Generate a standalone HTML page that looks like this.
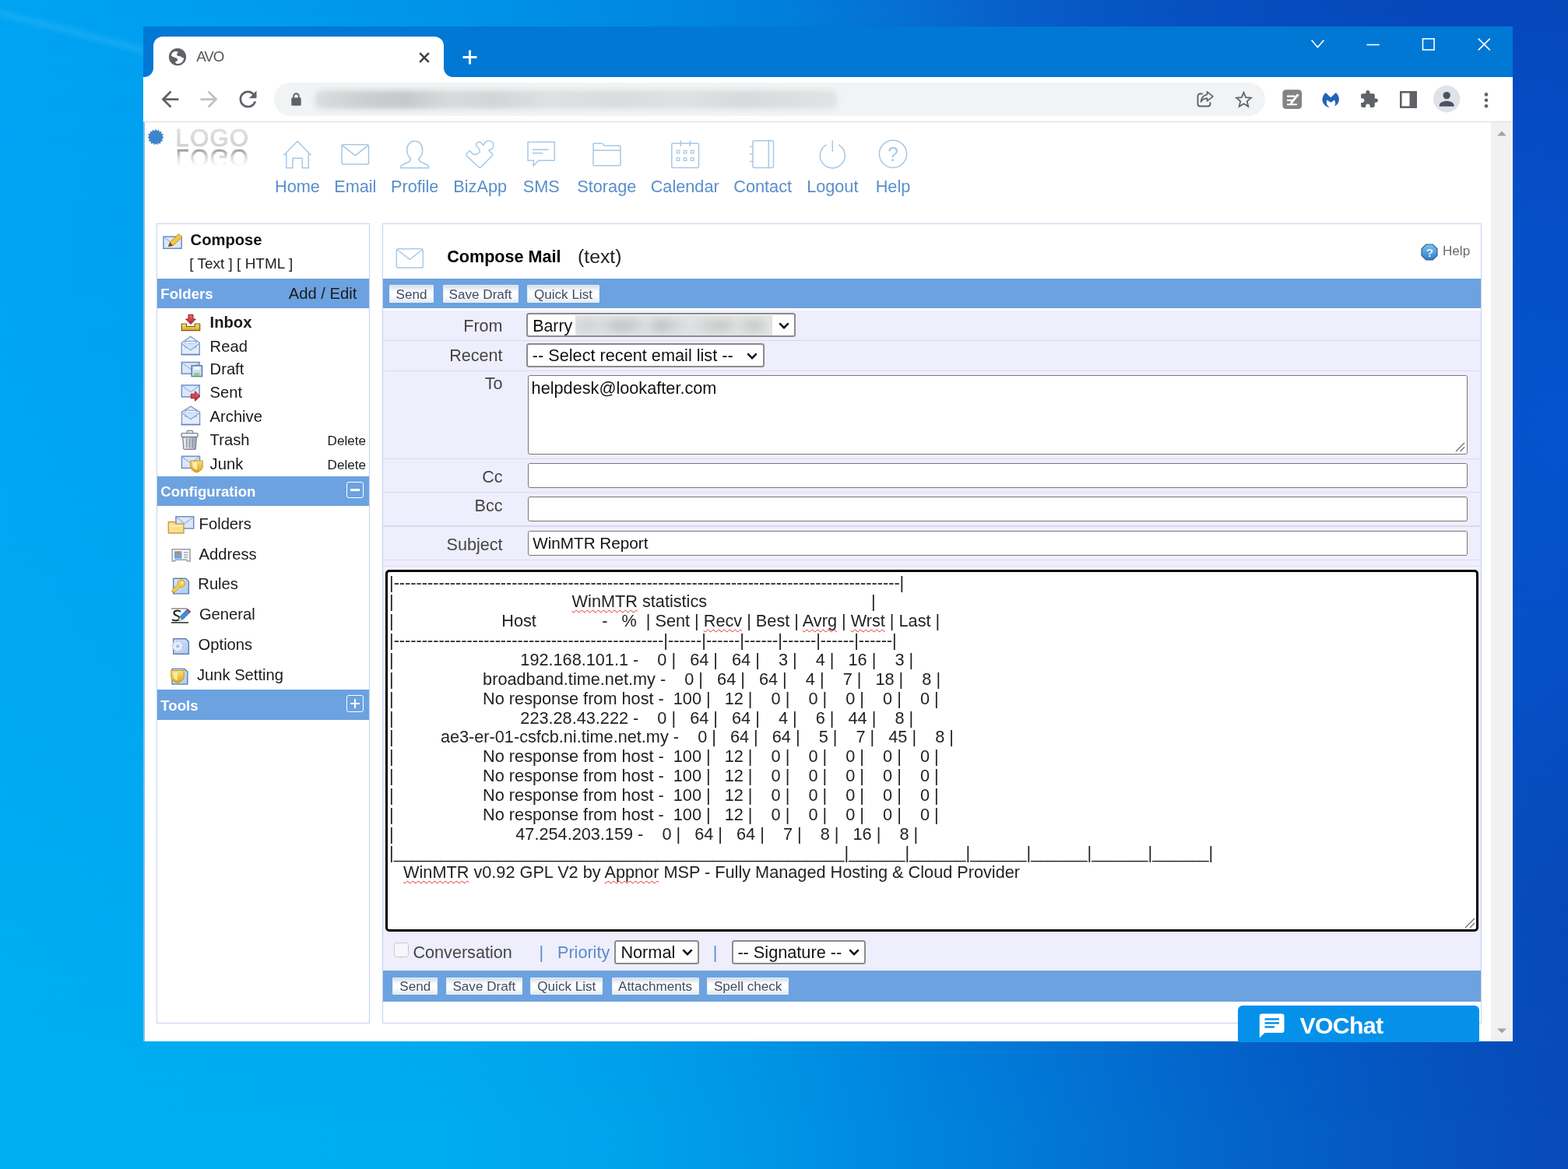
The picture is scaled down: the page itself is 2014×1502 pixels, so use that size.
<!DOCTYPE html>
<html lang="en">
<head>
<meta charset="utf-8">
<title>AVO</title>
<style>
*{box-sizing:border-box;margin:0;padding:0}
html,body{width:2014px;height:1502px;overflow:hidden}
body{position:relative;font-family:"Liberation Sans",Arial,sans-serif;font-size:21.7px;color:#222;
 background:linear-gradient(90deg,#00aff2 0,#00acf1 28%,#00a2ec 40%,#0094e5 50%,#0082dd 60%,#0372d3 70%,#0462c9 80%,#0654c0 91%,#084ab8 100%);}
#bgtop{position:absolute;left:0;top:0;width:2014px;height:1502px;
 background:linear-gradient(90deg,#00a3f2 0,#009dee 14%,#0092e8 30%,#0088e2 42%,#007edc 50%,#0670d4 57%,#0862cc 63%,#0756c5 70%,#064dc0 80%,#0648bc 90%,#0645b8 100%);
 -webkit-mask-image:linear-gradient(to bottom,#000 0%,rgba(0,0,0,.9) 25%,rgba(0,0,0,.35) 70%,rgba(0,0,0,0) 96%);mask-image:linear-gradient(to bottom,#000 0%,rgba(0,0,0,.9) 25%,rgba(0,0,0,.35) 70%,rgba(0,0,0,0) 96%)}
#bgr{position:absolute;left:1600px;top:0px;width:414px;height:1300px;background:radial-gradient(ellipse 380px 620px at 100% 42%,rgba(4,92,220,.6),rgba(4,92,220,.4) 45%,rgba(4,92,220,0) 100%)}
#bgstreak{position:absolute;left:-40px;top:-2px;width:250px;height:16px;transform-origin:0 0;transform:rotate(14.5deg);background:linear-gradient(to bottom,rgba(70,195,255,0),rgba(70,195,255,.3) 50%,rgba(70,195,255,0));filter:blur(2px)}
.abs{position:absolute}
/* ---------- window chrome ---------- */
#titlebar{position:absolute;left:184px;top:34px;width:1759px;height:65px;background:#0078d4}
#tab{position:absolute;left:197px;top:47px;width:373px;height:53px;background:#fff;border-radius:12px 12px 0 0}
#tabl,#tabr{position:absolute;top:87px;width:12px;height:12px;background:radial-gradient(circle at 0 0,rgba(255,255,255,0) 11.5px,#fff 12.5px)}
#tabl{left:185px}
#tabr{left:570px;background:radial-gradient(circle at 100% 0,rgba(255,255,255,0) 11.5px,#fff 12.5px)}
#tabtitle{position:absolute;left:252.300px;top:62.300px;font-size:18.800px;line-height:22px;color:#53575c;letter-spacing:-1.100px}
#toolbar{position:absolute;left:184px;top:99px;width:1759px;height:58px;background:#fff;border-bottom:1.5px solid #d9dbde}
#omni{position:absolute;left:352px;top:106px;width:1273px;height:43px;border-radius:22px;background:#f1f3f4}
#urlblur{position:absolute;left:404px;top:116px;width:672px;height:24px;border-radius:10px;filter:blur(3px);
 background:linear-gradient(90deg,#dcdddf,#cbcdcf 10%,#c6c8ca 17%,#d9dadc 26%,#d3d4d6 34%,#dfe0e2 45%,#dadbdd 58%,#e0e1e3 70%,#d8d9db 82%,#e2e3e5)}
#page{position:absolute;left:184px;top:157px;width:1759px;height:1181px;background:#fff;overflow:hidden}
#sbar{position:absolute;left:1915px;top:157px;width:28px;height:1181px;background:#f1f1f1}
svg{position:absolute;overflow:visible}
#soft{position:absolute;left:0;top:0;width:2014px;height:1502px;filter:blur(.5px)}
.btn{background:linear-gradient(#d3dde9 0%,#fff 38%,#fff 62%,#e3e9f1 100%);border:1.2px solid #e9eef5;border-radius:1px}
.inp{background:#fff;border:1.5px solid #767676;border-radius:2.8px}
.sel{background:#fff;border:2px solid #8b8b8b;border-radius:3.5px}
.sp{text-decoration:underline wavy #e8282b;text-decoration-thickness:1.3px;text-underline-offset:2.5px;text-decoration-skip-ink:none}
#ta{position:absolute;left:500px;top:736.600px;font-size:21.700px;line-height:24.850px;color:#222;white-space:pre}
/* ---------- page header ---------- */
#logo,#logor{position:absolute;left:225.500px;font-size:30.800px;line-height:30px;font-weight:400;letter-spacing:1.500px;height:30px;-webkit-text-stroke:.7px #d4d4d4}
#logo{top:162.500px;color:#d9d9d9;background:linear-gradient(#e2e2e2 20%,#cfcfcf 90%);-webkit-background-clip:text;background-clip:text;-webkit-text-fill-color:transparent;filter:blur(.5px)}
#logor{top:187.300px;transform:scaleY(-1);color:#9a9a9a;-webkit-text-stroke:.7px #9a9a9a;-webkit-mask-image:linear-gradient(to top,rgba(0,0,0,.95) 18%,rgba(0,0,0,.35) 50%,rgba(0,0,0,0) 88%);mask-image:linear-gradient(to top,rgba(0,0,0,.95) 18%,rgba(0,0,0,.35) 50%,rgba(0,0,0,0) 88%);filter:blur(.6px)}
.nl{position:absolute;top:226.500px;width:140px;margin-left:-70px;text-align:center;font-size:21.700px;line-height:25px;color:#5a8ecb;white-space:nowrap}
.ni{fill:none;stroke:#a5c8e6;stroke-width:1.500;stroke-linejoin:round;stroke-linecap:round}

</style>
</head>
<body>
<div id="bgtop"></div><div id="bgr"></div><div id="bgstreak"></div>
<div id="soft">
<div id="titlebar"></div>
<div id="tab"></div><div id="tabl"></div><div id="tabr"></div>
<div id="tabtitle">AVO</div>
<div id="toolbar"></div>
<div id="omni"></div>
<div id="urlblur"></div>
<div id="page"></div>
<div id="sbar"></div>
<svg style="left:1915px;top:157px" width="28" height="1181" viewBox="0 0 28 1181"><path d="M8 17.500L14 11.500L20 17.500Z" fill="#a3a3a3"/><path d="M8 1164.500L14 1170.500L20 1164.500Z" fill="#a3a3a3"/></svg>

<!-- tab favicon, close, new tab -->
<svg style="left:216px;top:61px" width="24" height="24" viewBox="216 61 24 24"><circle cx="228" cy="73.200" r="11.100" fill="#5f6368"/><path fill="#fff" d="M219.900 71.800C220.300 69.500 221.200 68 221.900 67.400C223.200 66.300 224.800 65.900 226.400 65.900L228.800 66.900L226.800 69.900L228.300 71.800L232.800 72.800L234.500 74.800L236 73.800C236.200 75.200 235.900 76.600 235.300 77.800C234.600 79.300 233.400 80.500 231.800 81.300C230.200 82 228 82.200 226.400 81.800L224.900 79.800L228.300 77.800L227.300 74.800L223.900 73.800Z"/></svg>
<svg style="left:537.5px;top:66.8px" width="14" height="14" viewBox="0 0 14 14"><path d="M1.2 1.2L12.8 12.8M12.8 1.2L1.2 12.8" stroke="#3c4043" stroke-width="2.5" fill="none"/></svg>
<svg style="left:594px;top:64px" width="19" height="19" viewBox="0 0 19 19"><path d="M9.5 0.5V18.500M0.5 9.500H18.500" stroke="#fff" stroke-width="2.800" fill="none"/></svg>
<!-- window controls -->
<svg style="left:1680px;top:44px" width="240" height="26" viewBox="1680 44 240 26" fill="none" stroke="#fff" stroke-width="1.600">
<path d="M1684.6 51.6L1692.5 60.8L1700.4 51.600"/>
<path d="M1755.4 57.5H1771.800"/>
<rect x="1827.5" y="49.8" width="14.6" height="14.200"/>
<path d="M1898.8 49.6L1913.8 64.400M1913.8 49.6L1898.8 64.400"/>
</svg>
<!-- nav buttons -->
<svg style="left:201.9px;top:111px" width="33" height="33" viewBox="0 0 24 24"><path fill="#5f6368" d="M20 11H7.83l5.59-5.59L12 4l-8 8 8 8 1.41-1.41L7.83 13H20v-2z"/></svg>
<svg style="left:251.900px;top:111px" width="33" height="33" viewBox="0 0 24 24"><path fill="#bdc1c6" d="M12 4l-1.410 1.410L16.170 11H4v2h12.170l-5.580 5.590L12 20l8-8z"/></svg>
<svg style="left:301.500px;top:111px" width="33" height="33" viewBox="0 0 24 24"><path fill="#5f6368" d="M17.650 6.350C16.200 4.900 14.210 4 12 4c-4.420 0-7.990 3.580-7.990 8s3.570 8 7.990 8c3.730 0 6.840-2.550 7.730-6h-2.080c-.82 2.330-3.040 4-5.650 4-3.310 0-6-2.690-6-6s2.690-6 6-6c1.660 0 3.140.69 4.220 1.780L13 11h7V4l-2.350 2.350z"/></svg>
<!-- lock -->
<svg style="left:373.500px;top:118.500px" width="13" height="17" viewBox="0 0 13 17"><path d="M3.200 7V4.600a3.300 3.300 0 0 1 6.600 0V7" fill="none" stroke="#5f6368" stroke-width="1.900"/><rect x="0.300" y="6.400" width="12.400" height="10.300" rx="1.300" fill="#5f6368"/></svg>
<!-- share -->
<svg style="left:1536px;top:116px" width="24" height="22" viewBox="0 0 24 22" fill="none" stroke="#5f6368" stroke-width="1.900" stroke-linejoin="round" stroke-linecap="round"><path d="M8 4.500H5.500a3 3 0 0 0-3 3V17.500a3 3 0 0 0 3 3H15.500a3 3 0 0 0 3-3V16"/><path d="M14.500 1.800L22 7.800L14.500 13.800V10.300C10.500 10.300 8 11.800 6.500 14.800C7 10.300 9.500 6.300 14.500 5.500Z" stroke-width="1.700"/></svg>
<!-- star -->
<svg style="left:1585.100px;top:114.900px" width="25" height="25" viewBox="0 0 24 24"><path fill="none" stroke="#5f6368" stroke-width="1.700" stroke-linejoin="miter" d="M12 3.700l2.550 6.020 6.520.56-4.950 4.290 1.480 6.370L12 17.560 6.400 20.940l1.480-6.370-4.950-4.290 6.520-.56z"/></svg>
<!-- ext1 -->
<svg style="left:1640px;top:108px" width="90" height="40" viewBox="1640 108 90 40"><rect x="1647.400" y="115.200" width="24.700" height="24.800" rx="4.300" fill="#848484"/><path d="M1653 123.600H1663.200M1653 128.900H1661.400M1653 134.200H1666" stroke="#fff" stroke-width="2.100"/><path d="M1657.800 133.500L1666.300 122.300" stroke="#fff" stroke-width="2.800"/><path d="M1666.200 120.300L1668.800 122.600L1667.200 124.300L1664.800 122.200Z" fill="#fff"/>
<path fill="#2263b8" d="M1702.600 119L1709.300 125.200L1716 119C1719 122 1720.500 126 1719.800 129.500C1719 133 1716.500 135.500 1714.200 136.500C1715.500 134 1715.500 131 1714 128.500L1709.300 131.800L1704.600 128.500C1703.200 131 1703.500 135 1707.900 138.200C1703 137.500 1699.500 134 1698.600 129.500C1698 126 1699.500 122 1702.600 119Z"/></svg>
<!-- puzzle -->
<svg style="left:1746.300px;top:115.200px" width="25" height="25" viewBox="0 0 24 24"><path fill="#5f6368" d="M20.500 11H19V7c0-1.100-.9-2-2-2h-4V3.500C13 2.120 11.880 1 10.500 1S8 2.120 8 3.500V5H4c-1.100 0-1.990.9-1.990 2v3.800H3.500c1.490 0 2.700 1.210 2.700 2.700s-1.210 2.700-2.700 2.700H2V20c0 1.100.9 2 2 2h3.800v-1.500c0-1.490 1.210-2.700 2.700-2.700 1.490 0 2.700 1.210 2.700 2.700V22H17c1.100 0 2-.9 2-2v-4h1.500c1.380 0 2.500-1.120 2.500-2.500S21.880 11 20.500 11z"/></svg>
<!-- side panel -->
<svg style="left:1798px;top:116.800px" width="22" height="22" viewBox="0 0 22 22"><rect x="1.300" y="1.300" width="19.400" height="19.400" fill="#fff" stroke="#5f6368" stroke-width="2.600"/><rect x="12.500" y="1" width="9" height="20" fill="#5f6368"/></svg>
<!-- avatar -->
<svg style="left:1840.800px;top:110.300px" width="34.400" height="34.400" viewBox="0 0 34.400 34.400"><circle cx="17.200" cy="17.200" r="17.200" fill="#e0e2e8"/><circle cx="17.200" cy="12.600" r="4.700" fill="#4a5363"/><path d="M7.800 25.500c0-4.200 6.200-5.800 9.400-5.800s9.400 1.600 9.400 5.800v1.200H7.800z" fill="#4a5363"/></svg>
<!-- menu dots -->
<svg style="left:1905px;top:118px" width="8" height="22" viewBox="0 0 8 22"><circle cx="4" cy="3.400" r="2.300" fill="#5f6368"/><circle cx="4" cy="10.800" r="2.300" fill="#5f6368"/><circle cx="4" cy="18.200" r="2.300" fill="#5f6368"/></svg>


<div id="winedge" class="abs" style="left:184px;top:157px;width:1.500px;height:1181px;background:#7cc0f2"></div>
<svg style="left:189px;top:164.500px" width="22" height="22" viewBox="-11 -11 22 22"><polygon fill="#3d85c8" points="0,-10.300 1.700,-7.700 4,-9.500 4.700,-6.500 7.300,-7.300 7.100,-4.300 10,-3.900 8.500,-1.400 10.300,0.900 8,2.500 9.200,5.200 6.400,5.700 6.100,8.700 3.400,7.900 1.800,10.300 0,8.300 -1.800,10.300 -3.400,7.900 -6.100,8.700 -6.400,5.700 -9.200,5.200 -8,2.500 -10.300,0.900 -8.500,-1.400 -10,-3.900 -7.100,-4.300 -7.300,-7.300 -4.700,-6.500 -4,-9.500 -1.700,-7.700"/></svg>
<div id="logo">LOGO</div>
<div id="logor">LOGO</div>
<svg class="ni" style="left:340px;top:165px" width="860" height="60" viewBox="340 165 860 60">
<!-- home -->
<path d="M364.800 199.300L382 181.500L399.200 199.300M367.800 196.800V215.800H375.800V203.300H388.300V215.800H396.300V196.800"/>
<!-- email -->
<rect x="439" y="185.800" width="34.500" height="25.300" rx="2.200"/><path d="M439.800 186.800L456.300 199.800L472.800 186.800"/>
<!-- profile -->
<path d="M532.700 181.300c5.800 0 10 4.500 10 11.200 0 5.300-2.300 9.300-4.800 11.200 0 2.500 .8 3.500 3 4.500l7.500 3.500c1.800 .9 2.400 2.200 2.400 4.100H514.600c0-1.900 .6-3.200 2.400-4.100l7.500-3.500c2.200-1 3-2 3-4.500-2.500-1.900-4.800-5.900-4.800-11.200 0-6.700 4.200-11.200 10-11.200z"/>
<!-- bizapp puzzle -->
<path d="M599.300 200.300Q598.300 199 599.500 197.600L602.500 194.300Q603.600 193.300 604.600 194.600C606 197.500 608.500 198.600 611 198.400C614 198.100 616.300 196 616.200 193.500C616.100 191 614 189.500 612.300 188C610.800 186.500 611.500 184.500 613.300 183C615 181.800 617 182.200 618.200 183.500L621 186.700C621.800 185 622.500 183.500 623.500 182.600C625.500 180.800 629 180.600 631.300 181.900C633.500 183.200 634.300 186 633.500 188.700C632.800 191 631 192.300 627.800 193L632.300 197.700Q633.300 198.800 632.200 200L617.600 214.800Q616.300 215.800 615 214.800Z"/>
<!-- sms -->
<path d="M678 182.500H712.300V206.300H691.500L685 213.300L685.500 206.300H678Z"/><path d="M684.500 192.300H704M684.500 196.800H697"/>
<!-- storage -->
<path d="M762 211.800V185.300C762 184.600 762.500 184.300 763 184.300H773.500L776.500 187.300H795.500C796.300 187.300 797 187.800 797 188.800V211.800C797 212.500 796.500 212.800 795.800 212.800H763.300C762.500 212.800 762 212.500 762 211.800ZM762 193.300H797"/>
<!-- calendar -->
<rect x="862.800" y="184.300" width="34.700" height="31.300" rx="1.500"/><path d="M874.300 181V187.500M886.300 181V187.500"/>
<g stroke-width="1.300"><rect x="869.200" y="193.300" width="3.600" height="3.600"/><rect x="878.300" y="193.300" width="3.600" height="3.600"/><rect x="887.400" y="193.300" width="3.600" height="3.600"/><rect x="869.200" y="202.800" width="3.600" height="3.600"/><rect x="878.300" y="202.800" width="3.600" height="3.600"/><rect x="887.400" y="202.800" width="3.600" height="3.600"/></g>
<!-- contact -->
<rect x="967" y="180.800" width="26.500" height="34.700" rx="2"/><path d="M987.300 181V215.500M963.500 188.500H967M963.500 198H967M963.500 207.500H967"/>
<!-- logout -->
<path d="M1069.300 181V194.300M1061 186.300A16 16 0 1 0 1077.600 186.300"/>
<!-- help -->
<circle cx="1147" cy="197.800" r="17.600"/>
</svg>
<div class="abs" style="left:1137px;top:183.500px;width:20px;text-align:center;font-size:25px;line-height:28px;color:#a5c8e6">?</div>
<div class="nl" style="left:382px">Home</div>
<div class="nl" style="left:456.300px">Email</div>
<div class="nl" style="left:532.700px">Profile</div>
<div class="nl" style="left:616.700px">BizApp</div>
<div class="nl" style="left:695.300px">SMS</div>
<div class="nl" style="left:779.300px">Storage</div>
<div class="nl" style="left:879.700px">Calendar</div>
<div class="nl" style="left:979.700px">Contact</div>
<div class="nl" style="left:1069.300px">Logout</div>
<div class="nl" style="left:1147px">Help</div>

<div class="abs" style="left:200.5px;top:286.5px;width:274px;height:1028px;border:1.5px solid #c4d2f1;background:#fff;"></div>
<div class="abs" style="left:244.6px;top:298px;font-size:20.2px;line-height:20.2px;color:#111;white-space:pre;font-weight:bold;">Compose</div>
<div class="abs" style="left:243.2px;top:329px;font-size:19px;line-height:19px;color:#222;white-space:pre;">[ Text ] [ HTML ]</div>
<div class="abs" style="left:201.5px;top:358px;width:272px;height:38.3px;background:#6ca2e0;"></div>
<div class="abs" style="left:206.3px;top:369px;font-size:18.65px;line-height:18.65px;color:#fff;white-space:pre;font-weight:bold;">Folders</div>
<div class="abs" style="left:201.5px;top:612px;width:272px;height:38.4px;background:#6ca2e0;"></div>
<div class="abs" style="left:206.3px;top:623px;font-size:18.65px;line-height:18.65px;color:#fff;white-space:pre;font-weight:bold;">Configuration</div>
<div class="abs" style="left:201.5px;top:886px;width:272px;height:39px;background:#6ca2e0;"></div>
<div class="abs" style="left:206.3px;top:898px;font-size:18.65px;line-height:18.65px;color:#fff;white-space:pre;font-weight:bold;">Tools</div>
<div class="abs" style="left:370.8px;top:367px;font-size:20.2px;line-height:20.2px;color:#1a1a1a;white-space:pre;">Add / Edit</div>
<div class="abs" style="left:445.3px;top:618.6px;width:21.6px;height:21.6px;border:1.6px solid #fff;border-radius:3px"></div>
<div class="abs" style="left:450.3px;top:628.3px;width:11.6px;height:2.4px;background:#fff;"></div>
<div class="abs" style="left:445.3px;top:893.3px;width:21.6px;height:21.6px;border:1.6px solid #fff;border-radius:3px"></div>
<div class="abs" style="left:450.3px;top:903px;width:11.6px;height:2.4px;background:#fff;"></div>
<div class="abs" style="left:454.9px;top:898.4px;width:2.4px;height:11.6px;background:#fff;"></div>
<div class="abs" style="left:269.6px;top:404px;font-size:20.2px;line-height:20.2px;color:#1a1a1a;white-space:pre;font-weight:bold;">Inbox</div>
<div class="abs" style="left:269.6px;top:435px;font-size:20.2px;line-height:20.2px;color:#1a1a1a;white-space:pre;">Read</div>
<div class="abs" style="left:269.6px;top:464px;font-size:20.2px;line-height:20.2px;color:#1a1a1a;white-space:pre;">Draft</div>
<div class="abs" style="left:269.6px;top:494px;font-size:20.2px;line-height:20.2px;color:#1a1a1a;white-space:pre;">Sent</div>
<div class="abs" style="left:269.6px;top:525px;font-size:20.2px;line-height:20.2px;color:#1a1a1a;white-space:pre;">Archive</div>
<div class="abs" style="left:269.6px;top:555px;font-size:20.2px;line-height:20.2px;color:#1a1a1a;white-space:pre;">Trash</div>
<div class="abs" style="left:269.6px;top:586px;font-size:20.2px;line-height:20.2px;color:#1a1a1a;white-space:pre;">Junk</div>
<div class="abs" style="left:420.6px;top:558px;font-size:17.1px;line-height:17.1px;color:#1a1a1a;white-space:pre;">Delete</div>
<div class="abs" style="left:420.6px;top:589px;font-size:17.1px;line-height:17.1px;color:#1a1a1a;white-space:pre;">Delete</div>
<div class="abs" style="left:255.6px;top:663px;font-size:20.2px;line-height:20.2px;color:#1a1a1a;white-space:pre;">Folders</div>
<div class="abs" style="left:255.6px;top:702px;font-size:20.2px;line-height:20.2px;color:#1a1a1a;white-space:pre;">Address</div>
<div class="abs" style="left:254.3px;top:740px;font-size:20.2px;line-height:20.2px;color:#1a1a1a;white-space:pre;">Rules</div>
<div class="abs" style="left:255.9px;top:779px;font-size:20.2px;line-height:20.2px;color:#1a1a1a;white-space:pre;">General</div>
<div class="abs" style="left:254.6px;top:818px;font-size:20.2px;line-height:20.2px;color:#1a1a1a;white-space:pre;">Options</div>
<div class="abs" style="left:252.9px;top:857px;font-size:20.2px;line-height:20.2px;color:#1a1a1a;white-space:pre;">Junk Setting</div>
<svg style="left:200px;top:290px" width="80" height="600" viewBox="200 290 80 600">
<defs><linearGradient id="gold" x1="0" y1="0" x2="0" y2="1"><stop offset="0" stop-color="#f7e27a"/><stop offset="1" stop-color="#dda51c"/></linearGradient><linearGradient id="red" x1="0" y1="0" x2="0" y2="1"><stop offset="0" stop-color="#ef6a72"/><stop offset="1" stop-color="#b8202c"/></linearGradient><linearGradient id="gry" x1="0" y1="0" x2="1" y2="0"><stop offset="0" stop-color="#eef1f6"/><stop offset=".5" stop-color="#c9d1dd"/><stop offset="1" stop-color="#9aa4b4"/></linearGradient><linearGradient id="doc" x1="0" y1="0" x2="1" y2="1"><stop offset="0" stop-color="#dbe9fc"/><stop offset="1" stop-color="#a9c9f3"/></linearGradient></defs>
<rect x="209.95" y="304.05" width="23.3" height="15.2" fill="#dbe7fb" stroke="#6f8fc0" stroke-width="1.5"/><path d="M211.2 305.3L221.6 312.99L232 305.3" fill="none" stroke="#9db6dc" stroke-width="1.3"/><path d="M216.5 316.5L218.5 311L229.500 300.500L233.800 304.500L222.500 315.500Z" fill="#f0c74a" stroke="#c98a2a" stroke-width="1"/><path d="M216 317L218.300 311.300L222 315.500Z" fill="#7a4a1a"/>
<path d="M233.300 416H239.600V419.500H250.400V416H256.700V424.700H233.300Z" fill="url(#gold)" stroke="#7b5a12" stroke-width="1.2" stroke-linejoin="round"/><path d="M242 404.300H248V410H251.300L245 416.500L238.700 410H242Z" fill="url(#red)" stroke="#8e1822" stroke-width="1"/>
<path d="M233.3 440.5L244.8 432.2L256.3 440.5V455.6H233.3Z" fill="#e3edfc" stroke="#7f9cc8" stroke-width="1.4" stroke-linejoin="round"/><rect x="238.1" y="438.5" width="13.4" height="8" fill="#f4f8ff" stroke="#8fa9d2" stroke-width="1.2"/><path d="M240.6 441.8H249" stroke="#6fa8d8" stroke-width="1.6"/><path d="M233.3 441.5L244.8 450L256.3 441.5" fill="#d5e3fa" stroke="#8fa9d2" stroke-width="1.2"/><path d="M232.6 455.5H257" stroke="#6584b6" stroke-width="1.6"/>
<rect x="233.35" y="465.45" width="22.9" height="14.8" fill="#dbe7fb" stroke="#6f8fc0" stroke-width="1.5"/><path d="M234.6 466.7L244.8 474.15L255 466.7" fill="none" stroke="#9db6dc" stroke-width="1.3"/><rect x="246.200" y="469.800" width="13.300" height="13.800" fill="#c9dcf6" stroke="#5d7db3" stroke-width="1.5"/><rect x="249" y="471" width="7.700" height="4.300" fill="#f3f7fd"/><rect x="249.300" y="479.300" width="7" height="3.200" fill="#8ed04c"/>
<rect x="233.35" y="494.95" width="22.9" height="14.9" fill="#dbe7fb" stroke="#6f8fc0" stroke-width="1.5"/><path d="M234.6 496.2L244.8 503.71L255 496.2" fill="none" stroke="#9db6dc" stroke-width="1.3"/><path d="M245.300 506.300H250.500V502.800L256.800 509L250.500 515.200V511.800H245.300Z" fill="url(#red)" stroke="#9c1c28" stroke-width="1"/>
<path d="M233.4 529.3L245 522.2L256.6 529.3V545.6H233.4Z" fill="#e3edfc" stroke="#7f9cc8" stroke-width="1.4" stroke-linejoin="round"/><rect x="238.2" y="527.3" width="13.6" height="8" fill="#f4f8ff" stroke="#8fa9d2" stroke-width="1.2"/><path d="M240.7 530.6H249.3" stroke="#6fa8d8" stroke-width="1.6"/><path d="M233.4 530.3L245 538.8L256.6 530.3" fill="#d5e3fa" stroke="#8fa9d2" stroke-width="1.2"/><path d="M232.7 545.5H257.3" stroke="#6584b6" stroke-width="1.6"/>
<rect x="240.300" y="553.300" width="7.300" height="3.500" rx="1" fill="#e8ebf0" stroke="#7d8592" stroke-width="1.200"/><path d="M234.800 561.500H252.300L251.300 576.500Q251.200 577.300 250.300 577.300H236.800Q235.900 577.300 235.800 576.500Z" fill="url(#gry)" stroke="#7d8592" stroke-width="1.300"/><path d="M239.800 563.500V575M243.600 563.500V575M247.400 563.500V575" stroke="#8a93a3" stroke-width="1.300"/><rect x="233" y="556.600" width="21" height="4.900" rx="1" fill="#f2f4f7" stroke="#7d8592" stroke-width="1.300"/>
<rect x="233.45" y="586.25" width="23.1" height="15.2" fill="#dbe7fb" stroke="#6f8fc0" stroke-width="1.5"/><path d="M234.7 587.5L245 595.19L255.3 587.5" fill="none" stroke="#9db6dc" stroke-width="1.3"/><path d="M244.800 592H260.200V599C260.200 603 256.500 606 252.500 607C248.500 606 244.800 603 244.800 599Z" fill="url(#gold)" stroke="#c8921a" stroke-width="1"/><path d="M247.500 594.300H253V603.500C250 602.500 247.500 600.500 247.500 598Z" fill="#fbf0b8"/>
<rect x="225.95" y="663.75" width="22.8" height="15.3" fill="#dbe7fb" stroke="#6f8fc0" stroke-width="1.5"/><path d="M227.2 665L237.35 672.74L247.5 665" fill="none" stroke="#9db6dc" stroke-width="1.3"/><path d="M216.300 670.500H224L226 673H236V685H216.300Z" fill="#f6e08a" stroke="#cf9a4a" stroke-width="1.400" stroke-linejoin="round"/><path d="M217.500 676H235" stroke="#fbf1c0" stroke-width="1.500"/>
<path d="M221.200 705.800H244V721H240.500L239.500 719.300H225.500L224.500 721H221.200Z" fill="#f7f8fa" stroke="#9a9da2" stroke-width="1.500"/><rect x="224" y="708.300" width="9.500" height="9.500" fill="#6ea4e0"/><rect x="225.300" y="708.500" width="6" height="3.500" fill="#c98a4a"/><path d="M236 709.800H241.500M236 712.900H241.500M236 716H241.500" stroke="#a9adb5" stroke-width="1.500"/>
<path d="M222.7 743.2H238.6L242.4 747V762.9H222.7Z" fill="url(#doc)" stroke="#5f7eae" stroke-width="1.400" stroke-linejoin="round"/><path d="M220.800 760.500L221.500 757.500L228.500 751C227.500 748 229.500 745 233 745C236.500 745 238.500 748 237.500 751C236.500 754 233.500 755 231 754L224.500 761Z" fill="#f1cf55" stroke="#c79a22" stroke-width="1"/><circle cx="233.800" cy="748.800" r="1.400" fill="#fff7d0"/>
<path d="M220 782H240M220 800.300H242" stroke="#8c8c8c" stroke-width="1.500"/><path d="M220 799.800H242" stroke="#444" stroke-width="1.400"/><path d="M232 786C229 783.500 223 784.500 223.500 788C224 791.500 231 790.500 230.500 794.500C230 798 224 798 221 796" fill="none" stroke="#222" stroke-width="2"/><path d="M229.500 797.500L231 792.500L241 782.200L244.800 786L234.500 796Z" fill="#3a8de0" stroke="#1f5fb0" stroke-width=".8"/><path d="M239.500 783.800L241 782.200L244.800 786L243.200 787.600Z" fill="#e0383e"/><path d="M229.300 797.800L230.800 793L234 796.200Z" fill="#f3d98a"/>
<path d="M222.7 820.7H238.6L242.4 824.5V840.3H222.7Z" fill="url(#doc)" stroke="#5f7eae" stroke-width="1.400" stroke-linejoin="round"/><circle cx="228.300" cy="830.300" r="6.800" fill="#e6eefb" stroke="#b9c9e6" stroke-width="2" stroke-dasharray="2.600 1.600"/><circle cx="228.300" cy="830.300" r="2.200" fill="#a9bfe3"/>
<path d="M221.1 859.4H237.1L240.9 863.2V879.1H221.1Z" fill="url(#doc)" stroke="#5f7eae" stroke-width="1.400" stroke-linejoin="round"/><path d="M219.800 861.500H236.200V869.500C236.200 873.500 232.500 876.300 228 877.300C223.500 876.300 219.800 873.500 219.800 869.500Z" fill="url(#gold)" stroke="#c8921a" stroke-width="1"/><path d="M222.500 863.800H228V874.300C225 873.300 222.500 871.500 222.500 869Z" fill="#fbf0b8" opacity=".8"/>
</svg>

<div class="abs" style="left:490.8px;top:286.5px;width:1412.2px;height:1028px;border:1.5px solid #c4d2f1;background:#fff;"></div>
<svg style="left:505px;top:315px" width="45" height="35" viewBox="505 315 45 35" fill="none" stroke="#a9cbe8" stroke-width="1.5" stroke-linejoin="round" stroke-linecap="round"><rect x="509.3" y="319.8" width="34" height="24.300" rx="2.200"/><path d="M510.300 321L526.300 333.300L542.300 321"/></svg>
<div class="abs" style="left:574.2px;top:319px;font-size:21.6px;line-height:21.6px;color:#000;white-space:pre;font-weight:bold;">Compose Mail</div>
<div class="abs" style="left:742px;top:318px;font-size:24.8px;line-height:24.8px;color:#222;white-space:pre;">(text)</div>
<svg style="left:1825px;top:313px" width="22" height="22" viewBox="0 0 22 22"><defs><linearGradient id="hb" x1="0" y1="0" x2="0" y2="1"><stop offset="0" stop-color="#7fc0ee"/><stop offset="1" stop-color="#2f7fc8"/></linearGradient></defs><path d="M6.800 1H15.200L21 6.800V15.200L15.200 21H6.800L1 15.200V6.800Z" fill="url(#hb)" stroke="#2a5f9e" stroke-width="1.200"/></svg>
<div class="abs" style="left:1831.7px;top:317px;font-size:15.5px;line-height:15.5px;color:#e8f3fc;white-space:pre;font-weight:bold;">?</div>
<div class="abs" style="left:1853px;top:314px;font-size:17.1px;line-height:17.1px;color:#6a6a6a;white-space:pre;">Help</div>
<div class="abs" style="left:492px;top:357.6px;width:1410.3px;height:38.7px;background:#6ca2e0;"></div>
<div class="abs btn" style="left:500.1px;top:366.4px;width:56.9px;height:22.6px;"></div>
<div class="abs" style="left:500.1px;top:370px;font-size:17.1px;line-height:17.1px;color:#3f4a63;white-space:pre;width:56.9px;text-align:center;">Send</div>
<div class="abs btn" style="left:568.5px;top:366.4px;width:97px;height:22.6px;"></div>
<div class="abs" style="left:568.5px;top:370px;font-size:17.1px;line-height:17.1px;color:#3f4a63;white-space:pre;width:97px;text-align:center;">Save Draft</div>
<div class="abs btn" style="left:677px;top:366.4px;width:93px;height:22.6px;"></div>
<div class="abs" style="left:677px;top:370px;font-size:17.1px;line-height:17.1px;color:#3f4a63;white-space:pre;width:93px;text-align:center;">Quick List</div>
<div class="abs" style="left:492px;top:398.6px;width:1410.3px;height:848.4px;background:#eeeefd;"></div>
<div class="abs" style="left:492px;top:436.6px;width:1410.3px;height:1.4px;background:#dadaee;"></div>
<div class="abs" style="left:492px;top:475.5px;width:1410.3px;height:1.4px;background:#dadaee;"></div>
<div class="abs" style="left:492px;top:588.5px;width:1410.3px;height:1.4px;background:#dadaee;"></div>
<div class="abs" style="left:492px;top:631.9px;width:1410.3px;height:1.4px;background:#dadaee;"></div>
<div class="abs" style="left:492px;top:675.3px;width:1410.3px;height:1.4px;background:#dadaee;"></div>
<div class="abs" style="left:492px;top:719.1px;width:1410.3px;height:1.4px;background:#dadaee;"></div>
<div class="abs" style="left:492px;top:727.2px;width:1410.3px;height:1px;background:#dedef2;"></div>
<div class="abs" style="left:492px;top:728.2px;width:1410.3px;height:3.8px;background:#f3f3fe;"></div>
<div class="abs" style="left:495.6px;width:150px;text-align:right;top:408px;font-size:21.6px;line-height:21.6px;color:#454545;white-space:pre;">From</div>
<div class="abs" style="left:495.6px;width:150px;text-align:right;top:446px;font-size:21.6px;line-height:21.6px;color:#454545;white-space:pre;">Recent</div>
<div class="abs" style="left:495.6px;width:150px;text-align:right;top:482px;font-size:21.6px;line-height:21.6px;color:#454545;white-space:pre;">To</div>
<div class="abs" style="left:495.6px;width:150px;text-align:right;top:602px;font-size:21.6px;line-height:21.6px;color:#454545;white-space:pre;">Cc</div>
<div class="abs" style="left:495.6px;width:150px;text-align:right;top:639px;font-size:21.6px;line-height:21.6px;color:#454545;white-space:pre;">Bcc</div>
<div class="abs" style="left:495.6px;width:150px;text-align:right;top:689px;font-size:21.6px;line-height:21.6px;color:#454545;white-space:pre;">Subject</div>
<div class="abs sel" style="left:676px;top:402px;width:346px;height:31.4px;"></div>
<div class="abs" style="left:684.2px;top:409px;font-size:21.4px;line-height:21.4px;color:#111;white-space:pre;">Barry</div>
<div class="abs" style="left:739px;top:404.500px;width:253px;height:26.500px;background:#e4e6e8;overflow:hidden"><div style="position:absolute;left:-10px;top:5px;width:273px;height:17px;filter:blur(5px);background:linear-gradient(90deg,#e4e6e8 0%,#cfd1d3 9%,#d9dbdd 16%,#c3c5c6 24%,#c9cbcd 30%,#dcdee0 37%,#c0c1c3 44%,#d4d6d8 51%,#dfe1e3 58%,#d0d2d3 66%,#c9cbc9 73%,#dcdedf 80%,#c8cac9 88%,#dfe1e2 95%,#e4e6e8 100%)"></div></div>
<svg style="left:999.5px;top:413.5px" width="14" height="9" viewBox="0 0 14 9"><path d="M1.300 1.300L7 7.200L12.700 1.300" fill="none" stroke="#111" stroke-width="2.500"/></svg>
<div class="abs sel" style="left:676px;top:441px;width:305.6px;height:30.6px;"></div>
<div class="abs" style="left:683.8px;top:446px;font-size:21.7px;line-height:21.7px;color:#111;white-space:pre;">-- Select recent email list --</div>
<svg style="left:959px;top:452.5px" width="14" height="9" viewBox="0 0 14 9"><path d="M1.300 1.300L7 7.200L12.700 1.300" fill="none" stroke="#111" stroke-width="2.500"/></svg>
<div class="abs inp" style="left:677.5px;top:482px;width:1207px;height:101.5px;"></div>
<div class="abs" style="left:682.6px;top:488px;font-size:21.7px;line-height:21.7px;color:#111;white-space:pre;">helpdesk@lookafter.com</div>
<svg style="left:1868px;top:567px" width="14" height="14" viewBox="0 0 14 14"><path d="M13 2L2 13M13 7.500L7.500 13" stroke="#6a6a6a" stroke-width="1.200"/></svg>
<div class="abs inp" style="left:677.5px;top:595.3px;width:1207px;height:31.5px;"></div>
<div class="abs inp" style="left:677.5px;top:638.4px;width:1207px;height:31.8px;"></div>
<div class="abs inp" style="left:677.5px;top:681.8px;width:1207px;height:31.9px;"></div>
<div class="abs" style="left:684.2px;top:688px;font-size:20.7px;line-height:20.7px;color:#111;white-space:pre;">WinMTR Report</div>
<div class="abs" style="left:494.600px;top:731.500px;width:1404.600px;height:465px;border:3.100px solid #000;border-radius:5px;background:#fff"></div>
<svg style="left:1880px;top:1178px" width="15" height="15" viewBox="0 0 15 15"><path d="M14 2L2 14M14 8L8 14" stroke="#6a6a6a" stroke-width="1.200"/></svg>
<div id="ta">|------------------------------------------------------------------------------------------|
|                                      <span class="sp">WinMTR</span> statistics                                   |
|                       Host              -   %  | Sent | <span class="sp">Recv</span> | Best | <span class="sp">Avrg</span> | <span class="sp">Wrst</span> | Last |
|------------------------------------------------|------|------|------|------|------|------|
|                           192.168.101.1 -    0 |   64 |   64 |    3 |    4 |   16 |    3 |
|                   broadband.time.net.my -    0 |   64 |   64 |    4 |    7 |   18 |    8 |
|                   No response from host -  100 |   12 |    0 |    0 |    0 |    0 |    0 |
|                           223.28.43.222 -    0 |   64 |   64 |    4 |    6 |   44 |    8 |
|          ae3-er-01-csfcb.ni.time.net.my -    0 |   64 |   64 |    5 |    7 |   45 |    8 |
|                   No response from host -  100 |   12 |    0 |    0 |    0 |    0 |    0 |
|                   No response from host -  100 |   12 |    0 |    0 |    0 |    0 |    0 |
|                   No response from host -  100 |   12 |    0 |    0 |    0 |    0 |    0 |
|                   No response from host -  100 |   12 |    0 |    0 |    0 |    0 |    0 |
|                          47.254.203.159 -    0 |   64 |   64 |    7 |    8 |   16 |    8 |
|________________________________________________|______|______|______|______|______|______|
   <span class="sp">WinMTR</span> v0.92 GPL V2 by <span class="sp">Appnor</span> MSP - Fully Managed Hosting &amp; Cloud Provider</div>
<div class="abs" style="left:505.800px;top:1211px;width:19.400px;height:19.400px;border:1.500px solid #c9c9cf;border-radius:3.500px;background:#f6f6fb"></div>
<div class="abs" style="left:530.5px;top:1213px;font-size:21.6px;line-height:21.6px;color:#454545;white-space:pre;">Conversation</div>
<div class="abs" style="left:692.5px;top:1213px;font-size:21.6px;line-height:21.6px;color:#5a8ecb;white-space:pre;">|</div>
<div class="abs" style="left:716px;top:1213px;font-size:21.6px;line-height:21.6px;color:#5a8ecb;white-space:pre;">Priority</div>
<div class="abs sel" style="left:789.3px;top:1207.5px;width:108.7px;height:31.3px;"></div>
<div class="abs" style="left:797.4px;top:1213px;font-size:21.7px;line-height:21.7px;color:#111;white-space:pre;">Normal</div>
<svg style="left:875.5px;top:1219px" width="14" height="9" viewBox="0 0 14 9"><path d="M1.300 1.300L7 7.200L12.700 1.300" fill="none" stroke="#111" stroke-width="2.500"/></svg>
<div class="abs" style="left:915.8px;top:1213px;font-size:21.6px;line-height:21.6px;color:#5a8ecb;white-space:pre;">|</div>
<div class="abs sel" style="left:939.8px;top:1207.5px;width:172.4px;height:31.3px;"></div>
<div class="abs" style="left:947.4px;top:1213px;font-size:21.7px;line-height:21.7px;color:#111;white-space:pre;">-- Signature --</div>
<svg style="left:1089.5px;top:1219px" width="14" height="9" viewBox="0 0 14 9"><path d="M1.300 1.300L7 7.200L12.700 1.300" fill="none" stroke="#111" stroke-width="2.500"/></svg>
<div class="abs" style="left:492px;top:1247px;width:1410.3px;height:39.8px;background:#6ca2e0;"></div>
<div class="abs btn" style="left:504.3px;top:1255.5px;width:57.8px;height:22.6px;"></div>
<div class="abs" style="left:504.3px;top:1259px;font-size:17.1px;line-height:17.1px;color:#3f4a63;white-space:pre;width:57.8px;text-align:center;">Send</div>
<div class="abs btn" style="left:572.6px;top:1255.5px;width:98.5px;height:22.6px;"></div>
<div class="abs" style="left:572.6px;top:1259px;font-size:17.1px;line-height:17.1px;color:#3f4a63;white-space:pre;width:98.5px;text-align:center;">Save Draft</div>
<div class="abs btn" style="left:681.3px;top:1255.5px;width:93.1px;height:22.6px;"></div>
<div class="abs" style="left:681.3px;top:1259px;font-size:17.1px;line-height:17.1px;color:#3f4a63;white-space:pre;width:93.1px;text-align:center;">Quick List</div>
<div class="abs btn" style="left:785.5px;top:1255.5px;width:112.2px;height:22.6px;"></div>
<div class="abs" style="left:785.5px;top:1259px;font-size:17.1px;line-height:17.1px;color:#3f4a63;white-space:pre;width:112.2px;text-align:center;">Attachments</div>
<div class="abs btn" style="left:907.9px;top:1255.5px;width:105.5px;height:22.6px;"></div>
<div class="abs" style="left:907.9px;top:1259px;font-size:17.1px;line-height:17.1px;color:#3f4a63;white-space:pre;width:105.5px;text-align:center;">Spell check</div>

<div class="abs" style="left:1590px;top:1291.500px;width:310px;height:47px;background:#0591ea;border-radius:6px 6px 0 0"></div>
<svg style="left:1617px;top:1301px" width="34" height="34" viewBox="0 0 34 34"><path d="M3 1.500H29.500Q32.500 1.500 32.500 4.500V23Q32.500 26 29.500 26H7.500L0.800 32.500V4.500Q0.800 1.500 3.800 1.500Z" fill="#fff"/><path d="M7.500 8.500H26M7.500 13.500H26M7.500 18.500H20" stroke="#0591ea" stroke-width="2.600"/></svg>
<div class="abs" style="left:1669.5px;top:1303px;font-size:30.3px;line-height:30.3px;color:#fff;white-space:pre;font-weight:bold;letter-spacing:-.7px;">VOChat</div>

</div>
</body>
</html>
